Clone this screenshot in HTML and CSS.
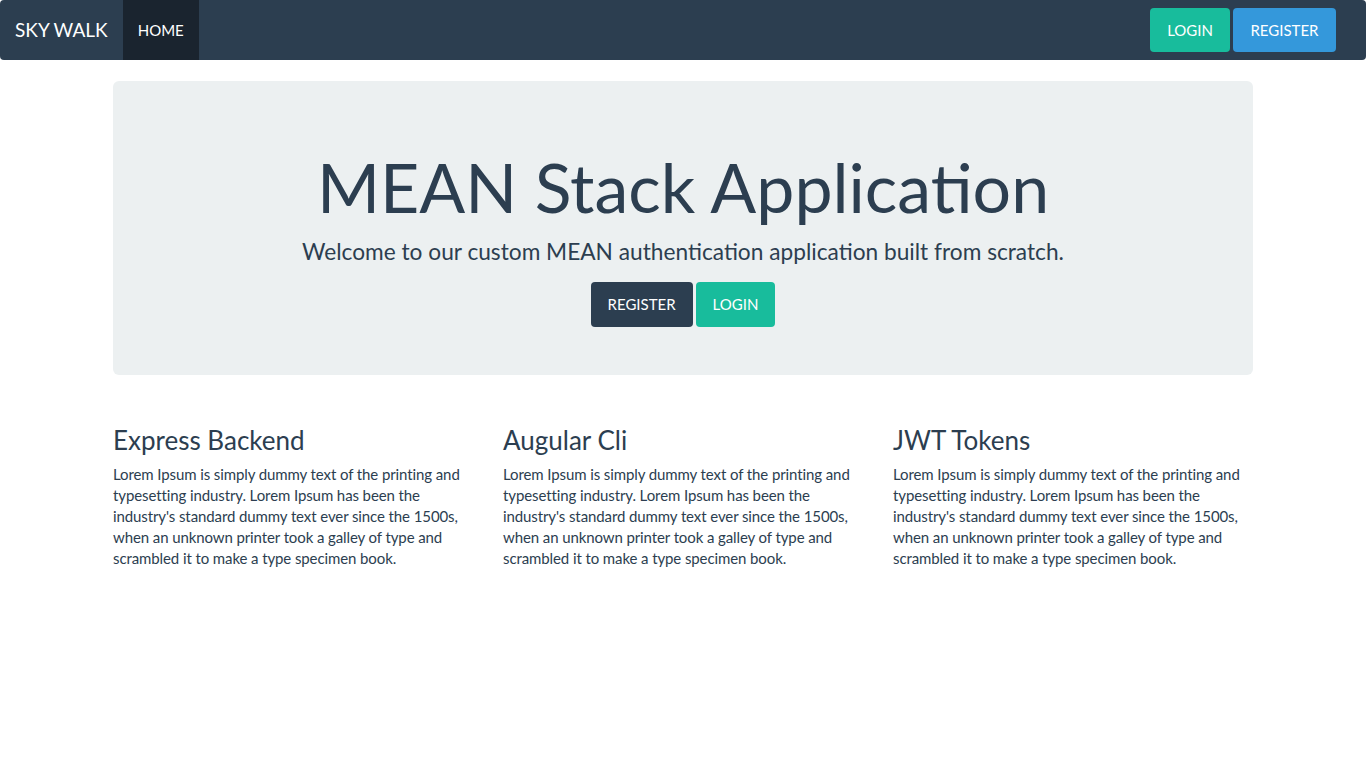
FILE: index.html
```html
<!DOCTYPE html>
<html lang="en">
<head>
<meta charset="utf-8">
<title>Sky Walk</title>
<link rel="stylesheet" href="styles.css">
</head>
<body>
<nav class="navbar">
  <div class="nav-left">
    <a class="brand" href="#">SKY WALK</a>
    <a class="nav-link active" href="#">HOME</a>
  </div>
  <div class="nav-right">
    <a class="btn btn-success" href="#">LOGIN</a>
    <a class="btn btn-info" href="#">REGISTER</a>
  </div>
</nav>
<main class="container">
  <section class="jumbotron">
    <h1>MEAN Stack Application</h1>
    <p class="lead">Welcome to our custom MEAN authentication application built from scratch.</p>
    <div class="actions">
      <a class="btn btn-primary" href="#">REGISTER</a>
      <a class="btn btn-success" href="#">LOGIN</a>
    </div>
  </section>
  <section class="row">
    <div class="col">
      <h3>Express Backend</h3>
      <p>Lorem Ipsum is simply dummy text of the printing and typesetting industry. Lorem Ipsum has been the industry's standard dummy text ever since the 1500s, when an unknown printer took a galley of type and scrambled it to make a type specimen book.</p>
    </div>
    <div class="col">
      <h3>Augular Cli</h3>
      <p>Lorem Ipsum is simply dummy text of the printing and typesetting industry. Lorem Ipsum has been the industry's standard dummy text ever since the 1500s, when an unknown printer took a galley of type and scrambled it to make a type specimen book.</p>
    </div>
    <div class="col">
      <h3>JWT Tokens</h3>
      <p>Lorem Ipsum is simply dummy text of the printing and typesetting industry. Lorem Ipsum has been the industry's standard dummy text ever since the 1500s, when an unknown printer took a galley of type and scrambled it to make a type specimen book.</p>
    </div>
  </section>
</main>
</body>
</html>
```

FILE: styles.css
```css
* { box-sizing: border-box; }
html, body { margin: 0; padding: 0; }
body {
  font-family: Lato, "Open Sans", "Liberation Sans", sans-serif;
  font-size: 15px;
  line-height: 1.428571;
  color: #2c3e50;
  background: #fff;
}
a { text-decoration: none; }

.navbar {
  height: 60px;
  background: #2c3e50;
  border-radius: 4px;
  display: flex;
  justify-content: space-between;
  align-items: stretch;
  margin-bottom: 21px;
}
.nav-left { display: flex; align-items: stretch; }
.brand {
  color: #fff;
  font-size: 19px;
  line-height: 21px;
  padding: 19px 15px 20px;
  height: 60px;
}
.nav-link {
  color: #fff;
  font-size: 15px;
  line-height: 21px;
  padding: 19.5px 15px;
  height: 60px;
}
.nav-link.active { background: #1a242f; }
.nav-right {
  display: flex;
  align-items: flex-start;
  gap: 3px;
  padding: 8px 30px 0 0;
}
.nav-right .btn { height: 44px; padding: 11.5px 17px; }
.nav-right .btn-info { padding: 11.5px 17.5px; }

.btn {
  display: inline-block;
  font-size: 15px;
  line-height: 21px;
  padding: 12px 17px;
  height: 45px;
  border-radius: 4px;
  color: #fff;
  text-align: center;
}
.btn-success { background: #18bc9c; }
.btn-info { background: #3498db; }
.btn-primary { background: #2c3e50; }

.container {
  width: 1140px;
  margin: 0 auto;
}
.jumbotron {
  background: #ecf0f1;
  border-radius: 6px;
  padding: 48px 60px;
  margin-bottom: 30px;
  text-align: center;
}
.jumbotron h1 {
  font-size: 68px;
  font-weight: 400;
  line-height: 74px;
  margin: 21px 0 10.5px;
}
.jumbotron .lead {
  font-size: 22.7px;
  line-height: 32px;
  margin: 0 0 14px;
  padding-top: 1px;
}
.actions {
  display: flex;
  justify-content: center;
  gap: 3px;
}
.row {
  display: grid;
  grid-template-columns: repeat(3, 360px);
  column-gap: 30px;
}
.col h3 {
  font-size: 26px;
  font-weight: 400;
  line-height: 1.1;
  margin: 21.5px 0 9.5px;
}
.col p {
  margin: 0 0 10.5px;
  line-height: 21px;
  letter-spacing: -0.1px;
}
```
